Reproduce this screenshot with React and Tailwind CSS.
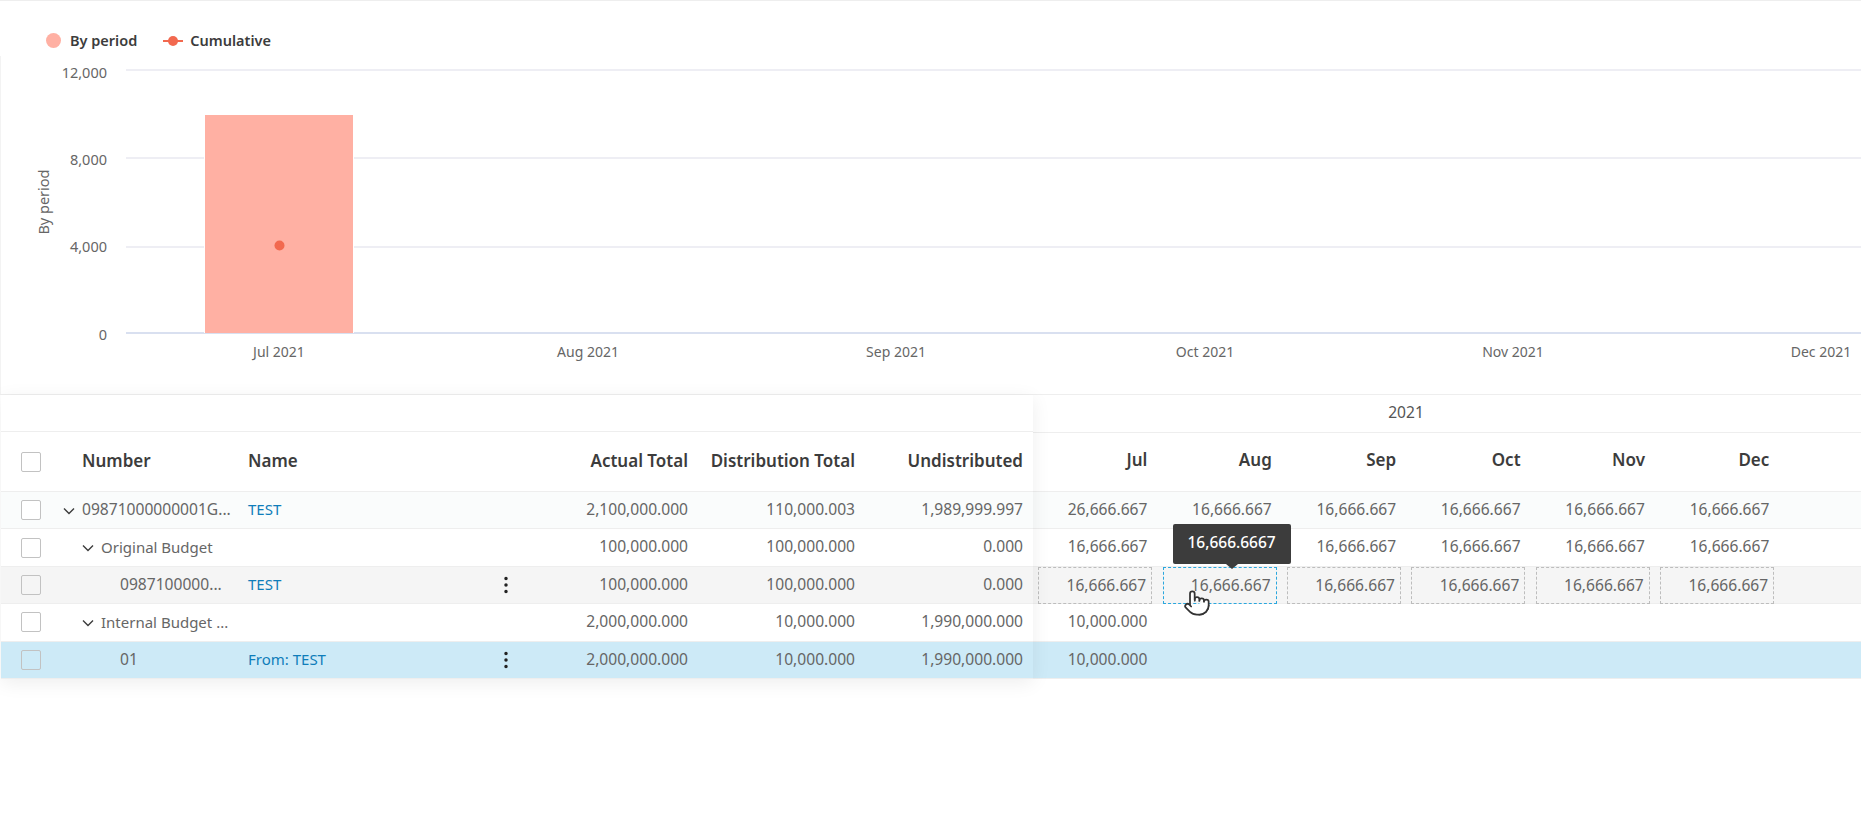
import React from 'react';
import { EllipsisVertical, Pointer } from 'lucide-react';

const xLabels = [
  ['Jul 2021', 279],
  ['Aug 2021', 588],
  ['Sep 2021', 896],
  ['Oct 2021', 1205],
  ['Nov 2021', 1513],
  ['Dec 2021', 1821],
];

const yLabels = [
  ['12,000', 73],
  ['8,000', 160],
  ['4,000', 247],
];

const v = '16,666.667';

const rows = [
  { level: 0, number: '09871000000001G...', name: 'TEST', actual: '2,100,000.000', dist: '110,000.003', undist: '1,989,999.997', months: ['26,666.667', v, v, v, v, v], bg: 'bg-[#fafcfc]', chevron: true },
  { level: 1, number: 'Original Budget', actual: '100,000.000', dist: '100,000.000', undist: '0.000', months: [v, '', v, v, v, v], bg: 'bg-white', chevron: true },
  { level: 2, number: '0987100000...', name: 'TEST', actual: '100,000.000', dist: '100,000.000', undist: '0.000', months: [v, v, v, v, v, v], bg: 'bg-[#f5f5f5]', kebab: true, editable: true },
  { level: 1, number: 'Internal Budget ...', actual: '2,000,000.000', dist: '10,000.000', undist: '1,990,000.000', months: ['10,000.000'], bg: 'bg-white', chevron: true },
  { level: 2, number: '01', name: 'From: TEST', actual: '2,000,000.000', dist: '10,000.000', undist: '1,990,000.000', months: ['10,000.000'], bg: 'bg-[#cdeaf7]', kebab: true, clear: true },
];

const frozenCols = 'grid grid-cols-[61px_186px_230px_55px_165px_167px_168px] items-center';
const monthCols = 'grid grid-cols-[124.4px_124.4px_124.4px_124.4px_124.4px_124.4px] items-center';
const levelPad = ['pl-px', 'pl-5 text-[15px]', 'pl-[58px]'];

function Checkbox({ clear }) {
  return (
    <div className={`ml-5 h-5 w-5 rounded-[2px] border border-[#c2c2c2] ${clear ? 'bg-transparent' : 'bg-white'}`} />
  );
}

function Chevron() {
  return (
    <svg className="mr-[7px] mt-[2px] h-2 w-3 shrink-0" viewBox="0 0 12 8" fill="none" stroke="#3c3c3c" strokeWidth="1.4">
      <path d="M1 1.5 L6 6.5 L11 1.5" />
    </svg>
  );
}

function Chart() {
  return (
    <svg className="block h-[338px] w-[1861px]" viewBox="0 56 1861 338" fontFamily="'Noto Sans', sans-serif" fontSize="14.5" fill="#666666">
      {[70, 158, 247].map((y) => (
        <line key={y} x1="126" x2="1861" y1={y} y2={y} stroke="#e9e9f1" strokeWidth="1.5" />
      ))}
      <line x1="126" x2="1861" y1="333" y2="333" stroke="#ccd6eb" strokeWidth="1.5" />
      <rect x="204" y="114" width="150" height="219" fill="#ffffff" />
      <rect x="205" y="115" width="148" height="218" fill="#ffb0a3" />
      <circle cx="279.5" cy="245.5" r="5" fill="#f2694f" />
      {yLabels.map(([label, ty]) => (
        <text key={label} x="107" y={ty + 5} textAnchor="end">{label}</text>
      ))}
      <text x="107" y="340" textAnchor="end">0</text>
      <text x="49" y="202" textAnchor="middle" transform="rotate(-90 49 202)">By period</text>
      {xLabels.map(([label, x]) => (
        <text key={label} x={x} y="357" textAnchor="middle" fontSize="14">{label}</text>
      ))}
    </svg>
  );
}

function AugTooltip() {
  return (
    <>
      <div className="absolute bottom-[calc(100%+4px)] left-[9px] z-20 flex h-10 w-[118px] items-center justify-center rounded-[2px] bg-[#3c3c3c] pb-[2px] text-[15.5px] font-medium text-white">
        16,666.6667
        <div className="absolute left-[53px] top-full h-0 w-0 border-x-[6px] border-t-[5px] border-x-transparent border-t-[#3c3c3c]" />
      </div>
      <Pointer className="absolute left-[19px] top-[21px] z-20" size={28} strokeWidth={1.5} fill="white" color="#333333" />
    </>
  );
}

function MonthCell({ value, editable, active }) {
  if (editable) {
    return (
      <div className="flex justify-center">
        <div className={`relative flex h-[37px] w-[114px] items-center justify-end border border-dashed pr-[5px] ${active ? 'border-[#2aa7de]' : 'border-[#bdbdbd]'}`}>
          {value}
          {active && <AugTooltip />}
        </div>
      </div>
    );
  }
  return <div className="pb-px pr-[10px] text-right">{value}</div>;
}

export default function App() {
  return (
    <div className="h-[824px] w-[1861px] overflow-hidden bg-white font-['Noto_Sans',sans-serif] text-[15.6px] text-[#666666]">
      {/* legend */}
      <div className="flex h-[56px] items-center gap-[26px] border-t border-[#eeeeee] pl-[46px] pt-[24px] text-[14.5px] font-semibold text-[#3c3c3c]">
        <div className="flex items-center gap-[9px]">
          <span className="h-[15px] w-[15px] rounded-full bg-[#ffb0a3]" />
          By period
        </div>
        <div className="flex items-center gap-[7px]">
          <span className="relative flex h-[10px] w-5 items-center justify-center">
            <span className="h-0.5 w-5 bg-[#f2694f]" />
            <span className="absolute h-[10px] w-[10px] rounded-full bg-[#f2694f]" />
          </span>
          Cumulative
        </div>
      </div>

      <div className="shadow-[inset_1px_0_0_#f3f3f3]">
        <Chart />
      </div>

      <div className="flex border-t border-[#eeeeee]">
        {/* frozen columns */}
        <div className="relative z-10 ml-px w-[1032px] shrink-0 bg-white shadow-[0_4px_18px_rgba(0,0,0,0.07)]">
          <div className="h-[37px] border-b border-[#eeeeee]" />
          <div className={`${frozenCols} h-[60px] border-b border-[#eeeeee] text-[17px] font-semibold text-[#3c3c3c]`}>
            <Checkbox />
            <div className="pb-[2px] pl-5">Number</div>
            <div className="pb-[2px]">Name</div>
            <div />
            <div className="whitespace-nowrap pb-[2px] pr-[10px] text-right">Actual Total</div>
            <div className="whitespace-nowrap pb-[2px] pr-[10px] text-right">Distribution Total</div>
            <div className="whitespace-nowrap pb-[2px] pr-[10px] text-right">Undistributed</div>
          </div>
          {rows.map((row) => (
            <div key={row.number} className={`${frozenCols} h-[37.4px] border-b border-[#eeeeee] ${row.bg}`}>
              <Checkbox clear={row.clear || row.editable} />
              <div className={`flex items-center whitespace-nowrap pb-px ${levelPad[row.level]}`}>
                {row.chevron && <Chevron />}
                {row.number}
              </div>
              <div className="pb-px text-[15px] text-[#0f7dba]">{row.name}</div>
              <div className="flex justify-center">
                {row.kebab && <EllipsisVertical size={22} strokeWidth={1.8} color="#222222" />}
              </div>
              <div className="pb-px pr-[10px] text-right">{row.actual}</div>
              <div className="pb-px pr-[10px] text-right">{row.dist}</div>
              <div className="pb-px pr-[10px] text-right">{row.undist}</div>
            </div>
          ))}
        </div>

        {/* month columns */}
        <div className="min-w-0 flex-1">
          <div className="flex h-[37px] w-[746px] items-center justify-center pb-[2px] text-[#555555]">2021</div>
          <div className="h-[60px] border-y border-[#eeeeee]">
            <div className={`${monthCols} h-full pb-[4px] text-[17px] font-semibold text-[#3c3c3c]`}>
              {['Jul', 'Aug', 'Sep', 'Oct', 'Nov', 'Dec'].map((m) => (
                <div key={m} className="pr-[10px] text-right">{m}</div>
              ))}
            </div>
          </div>
          {rows.map((row) => (
            <div key={row.number} className={`h-[37.4px] border-b border-[#eeeeee] ${row.bg}`}>
              <div className={`${monthCols} h-full`}>
                {row.months.map((m, i) => (
                  <MonthCell key={i} value={m} editable={row.editable} active={row.editable && i === 1} />
                ))}
              </div>
            </div>
          ))}
        </div>
      </div>
    </div>
  );
}
